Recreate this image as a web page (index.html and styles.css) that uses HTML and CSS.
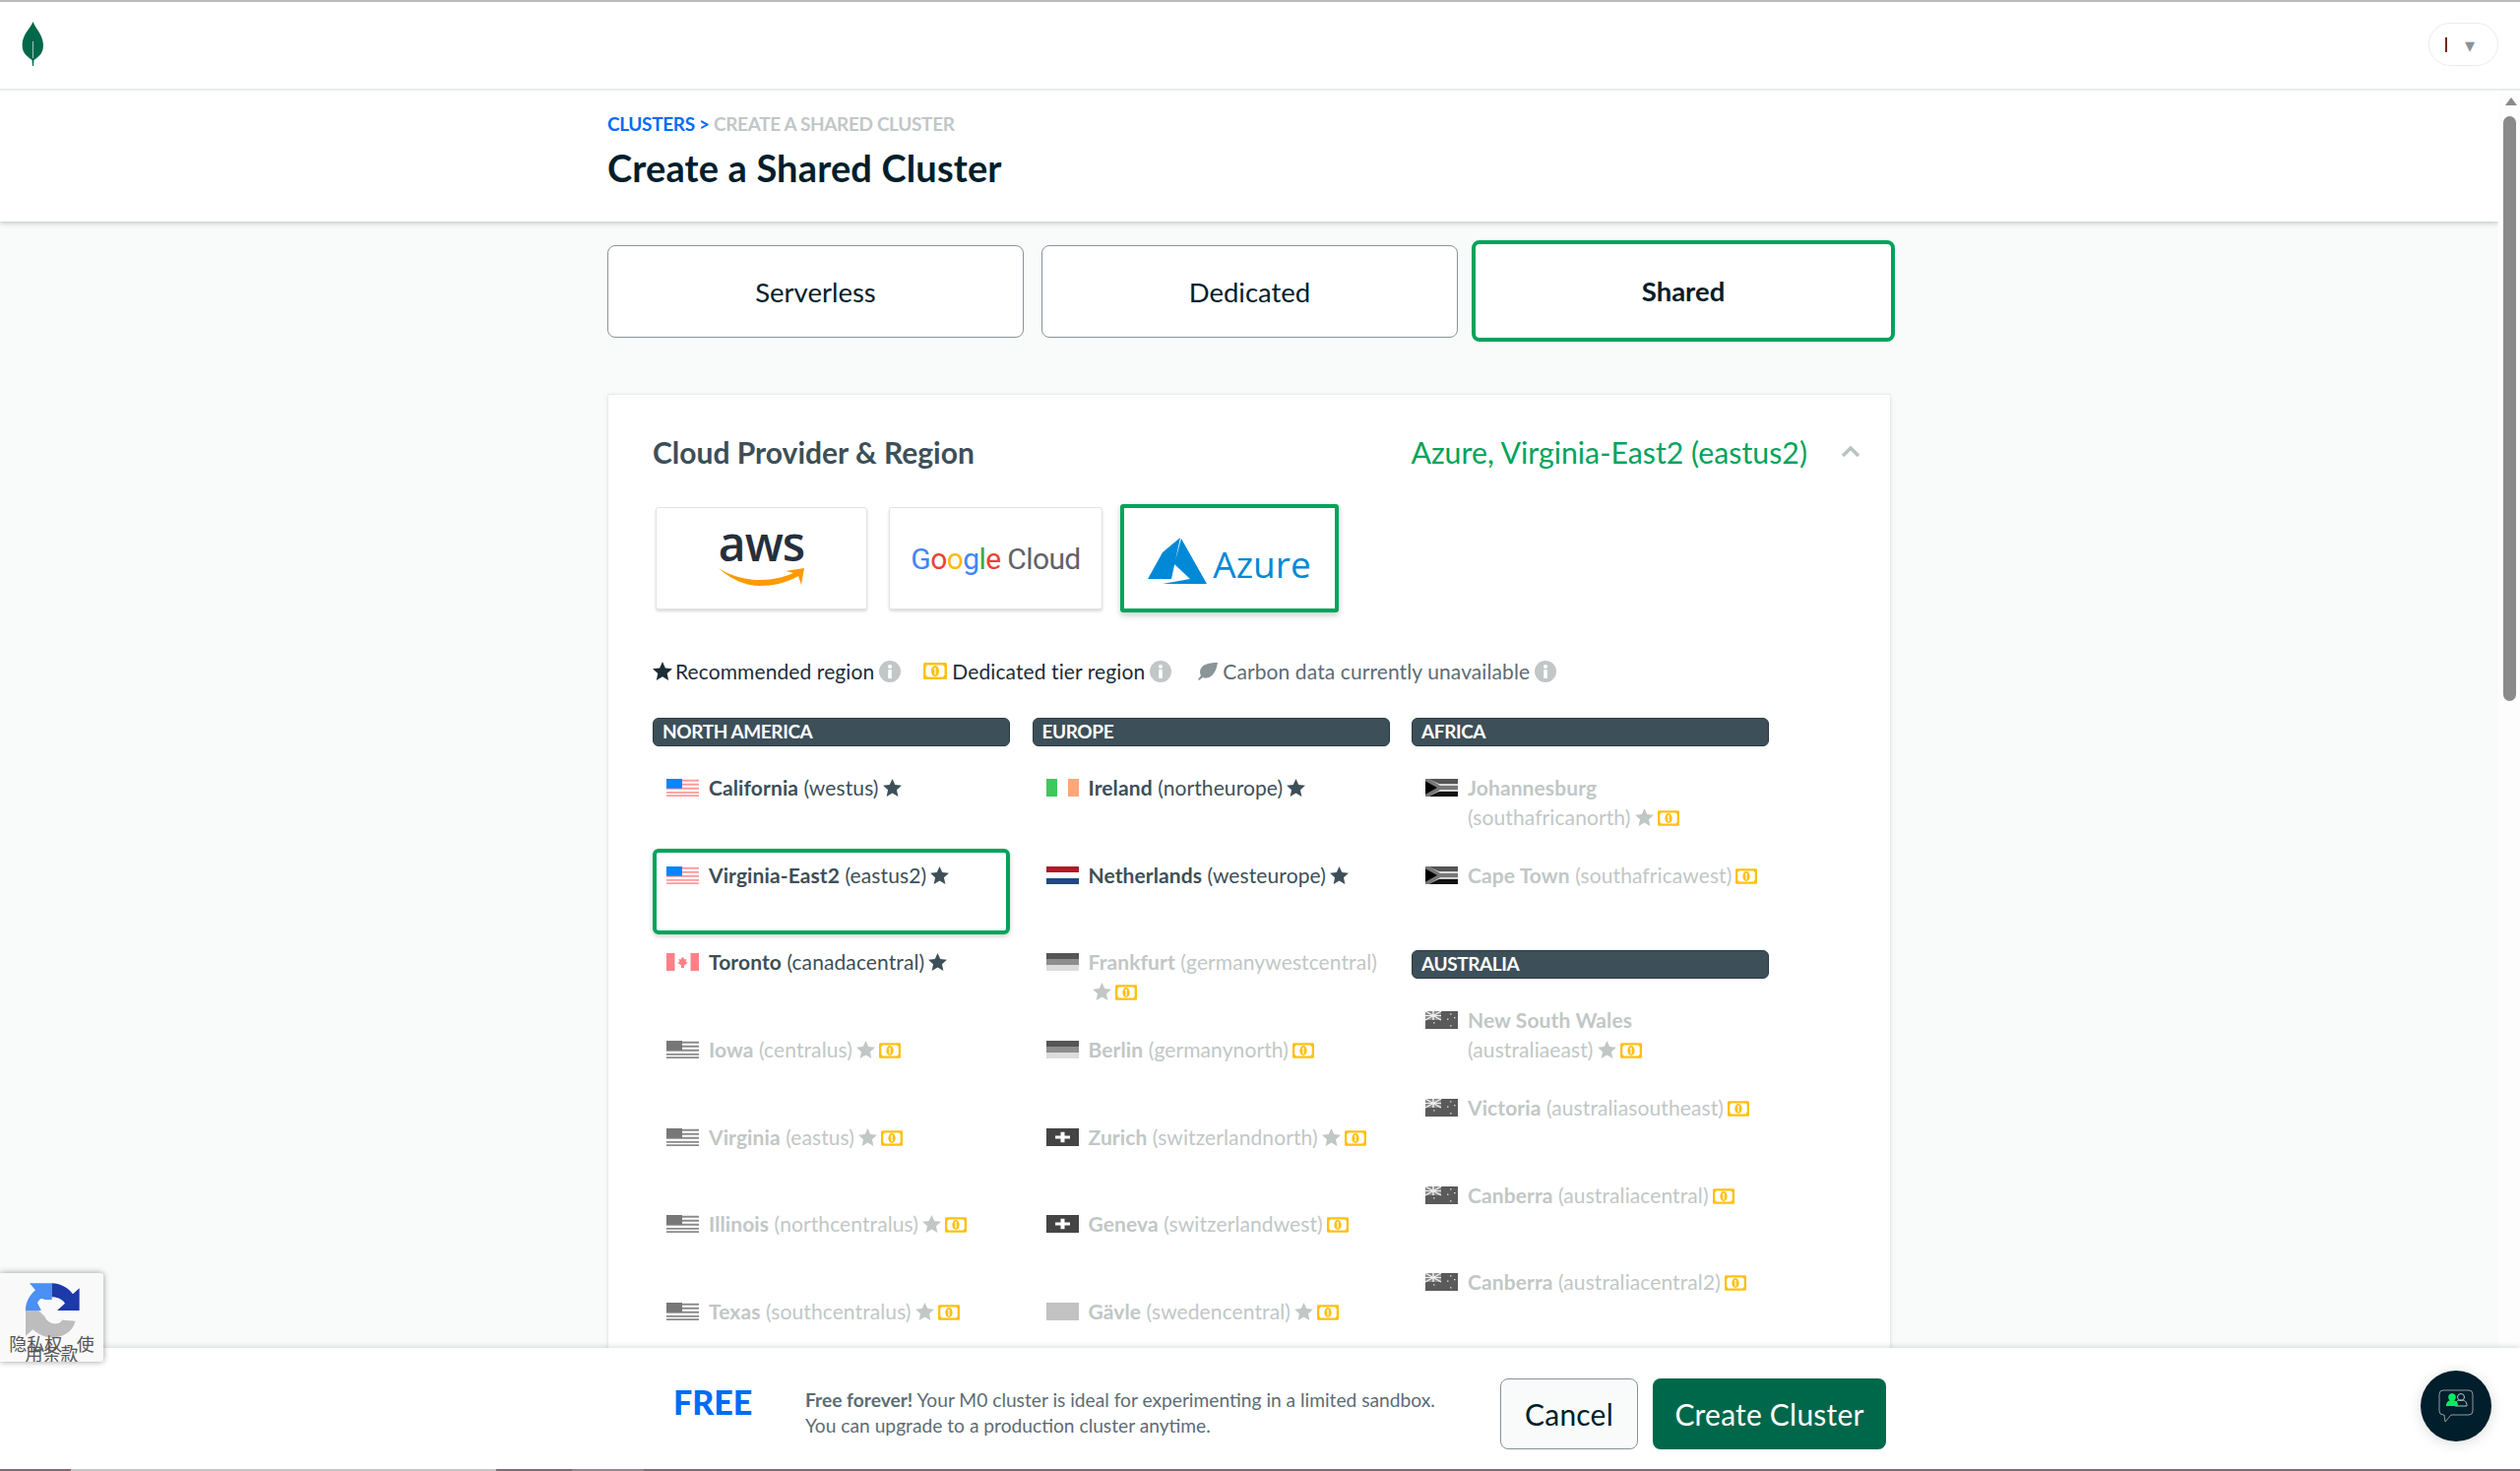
FILE: index.html
```html
<!DOCTYPE html>
<html>
<head>
<meta http-equiv="Content-Type" content="text/html; charset=utf-8"/>
<title>Create a Shared Cluster</title>
<link rel="stylesheet" href="styles.css">
</head>
<body>

<svg class="defs" width="0" height="0">
  <symbol id="star" viewBox="0 0 20 19"><path d="M10 0l2.900 6.400 7.100.8-5.300 4.700 1.500 7L10 15.300 3.800 18.900l1.500-7L0 7.200l7.100-.8z"/></symbol>
  <symbol id="bill" viewBox="0 0 24 17">
    <rect width="24" height="17" rx="1.500" fill="#ffc010"/>
    <path d="M4 2.500h16l1.500 2v8l-1.500 2H4l-1.500-2v-8z" fill="#fff"/>
    <ellipse cx="12" cy="8.500" rx="4" ry="5.500" fill="#ffc010"/>
    <path d="M11 5.500l1.700-.8v7.600h-1.400V6.600l-.8.300z" fill="#fff"/>
  </symbol>
  <symbol id="info" viewBox="0 0 22 22">
    <circle cx="11" cy="11" r="11" fill="#c1c7c6"/>
    <rect x="9.200" y="9" width="3.600" height="9" fill="#fff"/>
    <circle cx="11" cy="6" r="2" fill="#fff"/>
  </symbol>
  <symbol id="us" viewBox="0 0 33 24" preserveAspectRatio="none">
    <rect width="33" height="24" fill="#fff"/>
    <path d="M0 1h33v2.600H0zM0 6.400h33V9H0zM0 11.800h33v2.600H0zM0 17.200h33v2.600H0zM0 21.500h33V24H0z" fill="#ff9b9b"/>
    <rect width="16" height="13" fill="#0a84ff"/>
  </symbol>
  <symbol id="us-off" viewBox="0 0 33 24" preserveAspectRatio="none">
    <rect width="33" height="24" fill="#fff"/>
    <path d="M0 1h33v2.600H0zM0 6.400h33V9H0zM0 11.800h33v2.600H0zM0 17.200h33v2.600H0zM0 21.500h33V24H0z" fill="#8a8a8a"/>
    <rect width="16" height="13" fill="#777"/>
  </symbol>
  <symbol id="ca" viewBox="0 0 33 24" preserveAspectRatio="none">
    <rect width="33" height="24" fill="#fff"/>
    <path d="M0 0h8.500v24H0zM24.500 0H33v24h-8.500z" fill="#ff8088"/>
    <path d="M16.500 5l2 3.500 2-.5-.8 4 2.300 1-4 3.500V20h-3v-3.500L11 13l2.300-1-.8-4 2 .5z" fill="#ff8088"/>
  </symbol>
  <symbol id="ie" viewBox="0 0 33 24" preserveAspectRatio="none">
    <rect width="11" height="24" fill="#3dc95b"/>
    <rect x="22" width="11" height="24" fill="#ffa67a"/>
  </symbol>
  <symbol id="nl" viewBox="0 0 33 24" preserveAspectRatio="none">
    <rect width="33" height="8" fill="#ae1c28"/>
    <rect y="16" width="33" height="8" fill="#21468b"/>
  </symbol>
  <symbol id="de" viewBox="0 0 33 24" preserveAspectRatio="none">
    <rect width="33" height="8" fill="#555"/>
    <rect y="8" width="33" height="8" fill="#8e8e8e"/>
    <rect y="16" width="33" height="8" fill="#dcdcdc"/>
  </symbol>
  <symbol id="ch" viewBox="0 0 33 24" preserveAspectRatio="none">
    <rect width="33" height="24" fill="#444"/>
    <path d="M14.500 5h4v5h5.500v4h-5.500v5h-4v-5H9v-4h5.500z" fill="#fff"/>
  </symbol>
  <symbol id="se" viewBox="0 0 33 24" preserveAspectRatio="none"><rect width="33" height="24" fill="#c2c2c2"/></symbol>
  <symbol id="za" viewBox="0 0 33 24" preserveAspectRatio="none">
    <rect width="33" height="24" fill="#fff"/>
    <path d="M3 0h30v7H14z" fill="#555"/>
    <path d="M14 17h19v7H3z" fill="#111"/>
    <path d="M0 0h4l11 9h18v6H15L4 24H0z" fill="#777"/>
    <path d="M0 3l12 9-12 9z" fill="#000"/>
  </symbol>
  <symbol id="au" viewBox="0 0 33 24" preserveAspectRatio="none">
    <rect width="33" height="24" fill="#5a5a5a"/>
    <rect width="16" height="12" fill="#8a8a8a"/>
    <path d="M0 0l16 12M16 0L0 12M8 0v12M0 6h16" stroke="#eee" stroke-width="1.500"/>
    <path d="M8 15h1.500v1.500H8zM25 3h1.500v1.500H25zM29 8h1.500v1.500H29zM22 10h1.500v1.500H22zM25 19h1.500v1.500H25z" fill="#ddd"/>
  </symbol>
</svg>

<nav class="topnav">
  <svg class="leaf" width="23" height="45" viewBox="0 0 23 45">
    <path d="M11.500 0c2 5 4 7 7 12 5 9 4.500 18-1 23-2 2-4 3-5 4l-.5 6h-1l-.5-6c-1-1-3-2-5-4C-.5 30-1 21 4 12 7 7 9.500 5 11.500 0z" fill="#00684a"/>
    <path d="M11 20h1v17h-1z" fill="#9cc7b6"/>
  </svg>
  <div class="usermenu"><span class="caret-text"></span><span class="caret">&#9662;</span></div>
</nav>

<div class="main">
  <div class="page">
    <header class="pagehead">
      <div class="wrap">
        <div class="crumbs"><a class="crumb-link">CLUSTERS</a><span class="crumb-sep"> &gt; </span><span class="crumb-now">CREATE A SHARED CLUSTER</span></div>
        <h1>Create a Shared Cluster</h1>
      </div>
    </header>

    <div class="wrap">
      <div class="tabs">
        <div class="tab">Serverless</div>
        <div class="tab">Dedicated</div>
        <div class="tab tab-on">Shared</div>
      </div>

      <section class="card">
        <div class="card-head">
          <h2>Cloud Provider &amp; Region</h2>
          <div class="picked">Azure, Virginia-East2 (eastus2)</div>
          <svg class="chev" width="20" height="12" viewBox="0 0 20 12"><path d="M2 10l8-8 8 8" fill="none" stroke="#b8c4c2" stroke-width="3.500"/></svg>
        </div>

        <div class="providers">
          <div class="provider">
            <div class="aws">aws</div>
            <svg class="smile" width="88" height="20" viewBox="0 0 88 20"><path d="M0 2c14 9 28 12 43 12 12 0 24-3 33-7l-8-2 19-3-3 17-3-9c-12 7-26 10-39 10C27 20 12 13 0 2z" fill="#ff9900"/></svg>
          </div>
          <div class="provider provider-g">
            <div class="gcloud"><span class="g-b">G</span><span class="g-r">o</span><span class="g-y">o</span><span class="g-b">g</span><span class="g-g">l</span><span class="g-r">e</span> <span class="g-c">Cloud</span></div>
          </div>
          <div class="provider provider-on">
            <svg width="60" height="47" viewBox="0 0 60 47"><path d="M33 0L15 15 0 42h24zM34 1L27 27l16 15-28 5h45z" fill="#0089d6"/></svg>
            <span class="azure">Azure</span>
          </div>
        </div>

        <div class="legend">
          <span class="leg-item"><svg class="leg-star" width="20" height="19"><use href="#star"/></svg>Recommended region<svg class="leg-i" width="22" height="22"><use href="#info"/></svg></span>
          <span class="leg-item"><svg class="leg-bill" width="24" height="17"><use href="#bill"/></svg>Dedicated tier region<svg class="leg-i" width="22" height="22"><use href="#info"/></svg></span>
          <span class="leg-item leg-carbon"><svg class="leg-leaf" width="20" height="18" viewBox="0 0 20 18"><path d="M20 0C10 0 3 2 2 9c0 2 .5 3 1 4L0 17l1 1 4-3c2 1 5 1 8-1 4-3 6-8 7-14z" fill="#8a9499"/></svg>Carbon data currently unavailable<svg class="leg-i" width="22" height="22"><use href="#info"/></svg></span>
        </div>

        <div class="regions">
          <div class="col">
            <div class="col-head">NORTH AMERICA</div>
            <div class="region"><svg class="flag"><use href="#us"/></svg><div class="r-text"><b>California</b> (westus)<svg class="r-star"><use href="#star"/></svg></div></div>
            <div class="region region-on"><svg class="flag"><use href="#us"/></svg><div class="r-text"><b>Virginia-East2</b> (eastus2)<svg class="r-star"><use href="#star"/></svg></div></div>
            <div class="region"><svg class="flag"><use href="#ca"/></svg><div class="r-text"><b>Toronto</b> (canadacentral)<svg class="r-star"><use href="#star"/></svg></div></div>
            <div class="region off"><svg class="flag"><use href="#us-off"/></svg><div class="r-text"><b>Iowa</b> (centralus)<svg class="r-star"><use href="#star"/></svg><svg class="r-bill"><use href="#bill"/></svg></div></div>
            <div class="region off"><svg class="flag"><use href="#us-off"/></svg><div class="r-text"><b>Virginia</b> (eastus)<svg class="r-star"><use href="#star"/></svg><svg class="r-bill"><use href="#bill"/></svg></div></div>
            <div class="region off"><svg class="flag"><use href="#us-off"/></svg><div class="r-text"><b>Illinois</b> (northcentralus)<svg class="r-star"><use href="#star"/></svg><svg class="r-bill"><use href="#bill"/></svg></div></div>
            <div class="region off"><svg class="flag"><use href="#us-off"/></svg><div class="r-text"><b>Texas</b> (southcentralus)<svg class="r-star"><use href="#star"/></svg><svg class="r-bill"><use href="#bill"/></svg></div></div>
          </div>

          <div class="col">
            <div class="col-head">EUROPE</div>
            <div class="region"><svg class="flag"><use href="#ie"/></svg><div class="r-text"><b>Ireland</b> (northeurope)<svg class="r-star"><use href="#star"/></svg></div></div>
            <div class="region"><svg class="flag"><use href="#nl"/></svg><div class="r-text"><b>Netherlands</b> (westeurope)<svg class="r-star"><use href="#star"/></svg></div></div>
            <div class="region off"><svg class="flag"><use href="#de"/></svg><div class="r-text"><b>Frankfurt</b> (germanywestcentral)<br><svg class="r-star"><use href="#star"/></svg><svg class="r-bill"><use href="#bill"/></svg></div></div>
            <div class="region off"><svg class="flag"><use href="#de"/></svg><div class="r-text"><b>Berlin</b> (germanynorth)<svg class="r-bill"><use href="#bill"/></svg></div></div>
            <div class="region off"><svg class="flag"><use href="#ch"/></svg><div class="r-text"><b>Zurich</b> (switzerlandnorth)<svg class="r-star"><use href="#star"/></svg><svg class="r-bill"><use href="#bill"/></svg></div></div>
            <div class="region off"><svg class="flag"><use href="#ch"/></svg><div class="r-text"><b>Geneva</b> (switzerlandwest)<svg class="r-bill"><use href="#bill"/></svg></div></div>
            <div class="region off"><svg class="flag"><use href="#se"/></svg><div class="r-text"><b>Gävle</b> (swedencentral)<svg class="r-star"><use href="#star"/></svg><svg class="r-bill"><use href="#bill"/></svg></div></div>
          </div>

          <div class="col">
            <div class="col-head">AFRICA</div>
            <div class="region off"><svg class="flag"><use href="#za"/></svg><div class="r-text"><b>Johannesburg</b><br>(southafricanorth)<svg class="r-star"><use href="#star"/></svg><svg class="r-bill"><use href="#bill"/></svg></div></div>
            <div class="region off"><svg class="flag"><use href="#za"/></svg><div class="r-text"><b>Cape Town</b> (southafricawest)<svg class="r-bill"><use href="#bill"/></svg></div></div>
            <div class="col-head col-head-2">AUSTRALIA</div>
            <div class="region off"><svg class="flag"><use href="#au"/></svg><div class="r-text"><b>New South Wales</b><br>(australiaeast)<svg class="r-star"><use href="#star"/></svg><svg class="r-bill"><use href="#bill"/></svg></div></div>
            <div class="region off"><svg class="flag"><use href="#au"/></svg><div class="r-text"><b>Victoria</b> (australiasoutheast)<svg class="r-bill"><use href="#bill"/></svg></div></div>
            <div class="region off"><svg class="flag"><use href="#au"/></svg><div class="r-text"><b>Canberra</b> (australiacentral)<svg class="r-bill"><use href="#bill"/></svg></div></div>
            <div class="region off"><svg class="flag"><use href="#au"/></svg><div class="r-text"><b>Canberra</b> (australiacentral2)<svg class="r-bill"><use href="#bill"/></svg></div></div>
          </div>
        </div>
      </section>
    </div>
  </div>

  <div class="scrollbar">
    <div class="scroll-up"></div>
    <div class="scroll-thumb"></div>
  </div>
</div>

<footer class="bottom">
  <div class="free">FREE</div>
  <p class="free-note"><b>Free forever!</b> Your M0 cluster is ideal for experimenting in a limited sandbox.<br>You can upgrade to a production cluster anytime.</p>
  <button class="btn btn-cancel">Cancel</button>
  <button class="btn btn-create">Create Cluster</button>
</footer>
<div class="strip"><i class="s1"></i><i class="s2"></i><i class="s3"></i><i class="s4"></i><i class="s5"></i></div>

<div class="recaptcha">
  <svg class="rc-logo" width="120" height="105" viewBox="0 0 360 315">
    <path d="M78 138C78 112 90 92 108 76L90 55h68v50l-20 0 0 0-12-4c-5 3-10 8-12 14l12 23H78z" fill="#4a90f5"/>
    <path d="M158 55c25 0 48 12 64 33l20-18v68h-68l24-22c-7-11-22-19-40-19z" fill="#1c3aa9"/>
    <path d="M78 138h40l18 18c6 14 20 24 36 22 8-1 14-5 18-11l-24-2 64 5c-10 36-40 50-72 50-22 0-42-10-58-24l-22 20z" fill="#bdbdbd"/>
  </svg>
  <div class="rc-text">隐私权 - 使用条款</div>
</div>

<div class="chat">
  <svg width="72" height="72" viewBox="0 0 72 72">
    <path d="M23 20h26a4 4 0 0 1 4 4v17a4 4 0 0 1-4 4H31l-6 7-1-7h-1a4 4 0 0 1-4-4V24a4 4 0 0 1 4-4z" fill="none" stroke="#8f9a9e" stroke-width="1"/>
    <circle cx="41" cy="27" r="3.500" fill="none" stroke="#b8c4c2" stroke-width="1"/>
    <path d="M35 36c0-5 2.500-6 6-6s6 1 6 6z" fill="none" stroke="#b8c4c2" stroke-width="1"/>
    <circle cx="32" cy="27" r="3.800" fill="#00ed64"/>
    <path d="M26 36c0-5 3-6 6-6s6 1 6 6z" fill="#00ed64"/>
  </svg>
</div>

</body>
</html>
```

FILE: styles.css
```css
html, body {
  margin: 0;
  height: 100%;
  overflow: hidden;
}

body {
  display: flex;
  flex-direction: column;
  background: #fff;
  font-family: Lato, "Noto Sans", sans-serif;
  color: #001e2b;
  border-top: 2px solid #bbb;
  box-sizing: border-box;
}

.defs {
  position: absolute;
}

/* top bar */
.topnav {
  flex: none;
  height: 90px;
  box-sizing: border-box;
  border-bottom: 2px solid #e8edeb;
  display: flex;
  align-items: center;
  justify-content: space-between;
  padding: 0 22px;
  background: #fff;
}

.leaf {
  display: block;
  margin-bottom: 4px;
}

.usermenu {
  width: 71px;
  height: 44px;
  box-sizing: border-box;
  border: 1px solid #e8edeb;
  border-radius: 22px;
  display: flex;
  align-items: center;
  padding-left: 16px;
  gap: 18px;
  margin-bottom: 2px;
}

.caret-text {
  width: 2px;
  height: 15px;
  background: #6b2a17;
}

.caret {
  color: #889397;
  font-size: 20px;
}

/* main */
.main {
  flex: 1;
  min-height: 0;
  display: flex;
}

.page {
  flex: 1;
  min-width: 0;
  background: #f9fbfa;
  overflow: hidden;
}

.wrap {
  width: 1304px;
  margin: 0 auto;
}

.pagehead {
  background: #fff;
  height: 133px;
  padding-top: 24px;
  box-sizing: border-box;
  box-shadow: 0 2px 5px rgba(0, 30, 43, .22);
  position: relative;
}

.crumbs {
  font-size: 19px;
  line-height: 20px;
  letter-spacing: -.35px;
  font-weight: 700;
}

.crumb-link {
  color: #016bf8;
}

.crumb-sep {
  color: #016bf8;
}

.crumb-now {
  color: #c1c7c6;
}

h1 {
  margin: 12px 0 0;
  font-size: 38px;
  line-height: 44px;
  letter-spacing: .15px;
  font-weight: 700;
  color: #001e2b;
}

/* tabs */
.tabs {
  display: flex;
  gap: 18px;
  padding-top: 24px;
  height: 94px;
}

.tab {
  flex: none;
  width: 423px;
  height: 94px;
  box-sizing: border-box;
  border: 1px solid #889397;
  border-radius: 8px;
  background: #fff;
  display: flex;
  align-items: center;
  justify-content: center;
  font-size: 27.500px;
}

.tab-on {
  width: 430px;
  height: 103px;
  margin: -5px 0 0 -4px;
  border: 4px solid #00a35c;
  font-weight: 700;
}

/* card */
.card {
  margin-top: 57px;
  background: #fff;
  border: 1px solid #e8edeb;
  border-radius: 2px;
  box-shadow: 0 1px 4px rgba(0, 30, 43, .08);
  padding: 0 30px 60px 45px;
  height: 1100px;
  box-sizing: border-box;
}

.card-head {
  display: flex;
  align-items: center;
  padding-top: 40px;
  height: 36px;
  box-sizing: content-box;
}

h2 {
  margin: 0;
  flex: 1;
  font-size: 30px;
  line-height: 36px;
  font-weight: 700;
  color: #3d4f58;
}

.picked {
  font-size: 30.300px;
  color: #00a35c;
}

.chev {
  margin-left: 34px;
}

/* provider logos */
.providers {
  display: flex;
  align-items: center;
  margin: 35px 0 0 3px;
  height: 110px;
}

.provider {
  flex: none;
  width: 215px;
  height: 104px;
  box-sizing: border-box;
  margin-right: 22px;
  background: #fff;
  border: 1px solid #e1e4e3;
  border-radius: 3px;
  box-shadow: 0 2px 3px rgba(0, 0, 0, .15);
  display: flex;
  flex-direction: column;
  align-items: center;
  justify-content: center;
}

.provider-g {
  width: 217px;
  margin-right: 18px;
}

.provider-on {
  width: 222px;
  height: 110px;
  border: 4px solid #00a35c;
  flex-direction: row;
  gap: 6px;
  box-shadow: 0 3px 6px rgba(0, 0, 0, .2);
  padding-top: 4px;
}

.aws {
  font-family: "Open Sans", sans-serif;
  font-size: 48px;
  font-weight: 600;
  line-height: 40px;
  letter-spacing: -1px;
  color: #252f3e;
  margin-top: -8px;
}

.smile {
  margin-top: 3px;
}

.gcloud {
  font-family: Roboto, sans-serif;
  font-size: 30px;
  letter-spacing: -.6px;
  white-space: nowrap;
}

.g-b { color: #4285f4; }
.g-r { color: #ea4335; }
.g-y { color: #fbbc05; }
.g-g { color: #34a853; }
.g-c { color: #5f6368; }

.azure {
  font-family: "Open Sans", sans-serif;
  font-size: 37px;
  line-height: 40px;
  color: #0089d6;
  margin-top: 8px;
}

/* legend */
.legend {
  display: flex;
  align-items: center;
  margin-top: 47.500px;
  height: 24px;
  font-size: 21px;
  letter-spacing: .1px;
  color: #1c2d38;
  gap: 23px;
}

.leg-item {
  display: flex;
  align-items: center;
}

.leg-star {
  fill: #1c2d38;
  margin-right: 3px;
}

.leg-bill {
  margin-right: 5px;
}

.leg-leaf {
  margin-right: 5px;
}

.leg-i {
  margin-left: 5px;
}

.leg-carbon {
  color: #5d6c74;
  margin-left: 4px;
}

/* regions */
.regions {
  display: flex;
  gap: 22.500px;
  margin-top: 35.500px;
}

.col {
  width: 363px;
}

.col-head {
  height: 29px;
  box-sizing: border-box;
  background: #3d4f58;
  border: 1px solid #2a3a42;
  border-radius: 6px;
  padding-left: 9px;
  margin-bottom: 15px;
  font-size: 19px;
  line-height: 26px;
  font-weight: 700;
  color: #fff;
  letter-spacing: -.4px;
}

.col-head-2 {
  margin-top: 16.500px;
}

.region {
  height: 87px;
  box-sizing: border-box;
  margin-bottom: 1.700px;
  border: 4px solid transparent;
  border-radius: 6px;
  padding: 8px 10px;
  display: flex;
  gap: 10px;
  font-size: 21px;
  letter-spacing: .1px;
  line-height: 30px;
  color: #3d4f58;
}

.region-on {
  border-color: #00a35c;
  box-shadow: 0 2px 5px rgba(0, 0, 0, .2);
}

.off {
  color: #c1c7c6;
}

.flag {
  flex: none;
  width: 33px;
  height: 18px;
  margin-top: 6px;
}

.r-text {
  white-space: nowrap;
}

.r-text b {
  font-weight: 700;
}

.r-star {
  width: 19px;
  height: 18px;
  margin-left: 4px;
  vertical-align: -1px;
  fill: #3d4f58;
}

.off .r-star {
  fill: #c1c7c6;
}

.r-bill {
  width: 22px;
  height: 16px;
  margin-left: 4px;
  vertical-align: -1px;
}

/* fake scrollbar */
.scrollbar {
  flex: none;
  width: 22px;
  background: #fdfdfd;
  position: relative;
}

.scroll-up {
  width: 0;
  margin: 7px 0 0 7px;
  border: 6px solid transparent;
  border-top: 0;
  border-bottom: 8px solid #8a8a8a;
}

.scroll-thumb {
  width: 13px;
  height: 594px;
  margin: 11px 0 0 5px;
  background: #8a8a8a;
  border-radius: 7px;
}

/* footer */
.bottom {
  flex: none;
  height: 123px;
  box-sizing: border-box;
  background: #fff;
  position: relative;
  display: flex;
  align-items: flex-start;
  padding-left: 684px;
  box-shadow: 0 -2px 5px rgba(0, 30, 43, .12);
}

.free {
  width: 134px;
  margin-top: 35px;
  font-size: 34px;
  line-height: 40px;
  font-weight: 900;
  color: #016bf8;
}

.free-note {
  width: 706px;
  margin: 40px 0 0;
  font-size: 19.200px;
  line-height: 26px;
  color: #5c6c75;
  white-space: nowrap;
}

.free-note b {
  font-weight: 700;
}

.btn {
  flex: none;
  height: 72px;
  margin-top: 31px;
  box-sizing: border-box;
  border-radius: 8px;
  font-family: inherit;
  font-size: 30px;
  letter-spacing: .2px;
  padding: 0;
}

.btn-cancel {
  width: 140px;
  border: 1px solid #889397;
  background: #f9fbfa;
  color: #001e2b;
  margin-right: 15px;
}

.btn-create {
  width: 237px;
  border: 0;
  background: #00684a;
  color: #fff;
}

.strip {
  flex: none;
  height: 2px;
  display: flex;
  position: relative;
  background: #7d6b78;
}

.strip i { display: block; height: 2px; }
.s1 { width: 72px; background: #7d6b78; }
.s2 { width: 432px; background: #c5c5c5; }
.s3 { width: 77px; background: #7d6b78; }
.s4 { width: 73px; background: #96868f; }
.s5 { flex: 1; background: #7d6b78; }

/* overlays */
.recaptcha {
  position: absolute;
  left: 0;
  top: 1293px;
  width: 105px;
  height: 90px;
  background: #f9f9f9;
  border-radius: 0 3px 3px 0;
  box-shadow: 0 0 6px rgba(0, 0, 0, .4);
  overflow: hidden;
}

.rc-logo {
  position: absolute;
  left: 0;
  top: -8px;
}

.rc-text {
  position: absolute;
  left: 5px;
  right: 5px;
  top: 66px;
  font-family: "Noto Sans CJK SC", sans-serif;
  font-size: 18px;
  line-height: 10px;
  color: #555;
  text-align: center;
}

.chat {
  position: absolute;
  left: 2459px;
  top: 1392px;
  width: 72px;
  height: 72px;
  border-radius: 50%;
  background: #001e2b;
  box-shadow: 0 2px 14px rgba(0, 30, 43, .15);
}

.chat svg {
  display: block;
}
```
